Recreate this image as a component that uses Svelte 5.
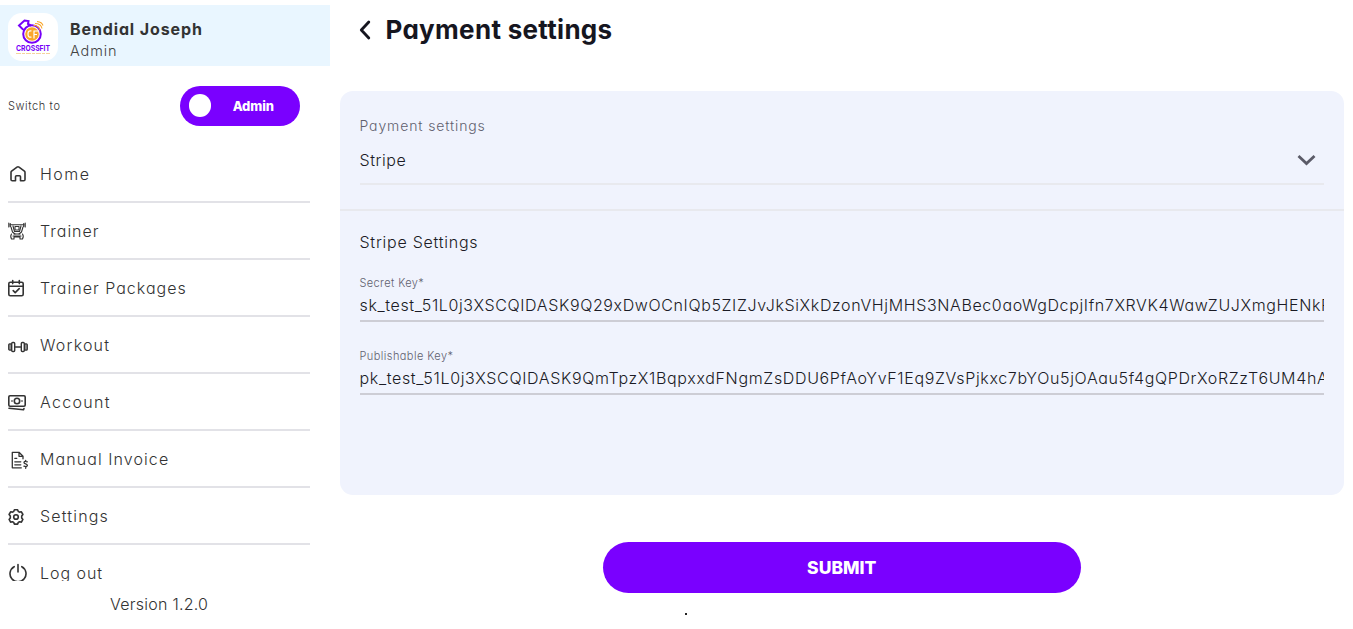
<script>
  const nav = [
    { id: 'home', label: 'Home', ls: 1.45 },
    { id: 'trainer', label: 'Trainer', ls: 1.0 },
    { id: 'packages', label: 'Trainer Packages', ls: 1.02 },
    { id: 'workout', label: 'Workout', ls: 1.2 },
    { id: 'account', label: 'Account', ls: 1.32 },
    { id: 'invoice', label: 'Manual Invoice', ls: 1.08 },
    { id: 'settings', label: 'Settings', ls: 1.17 },
    { id: 'logout', label: 'Log out', ls: 0.95 }
  ];
  const keys = [
    { label: 'Secret Key*', ls: 0.38, vls: 0.625, value: 'sk_test_51L0j3XSCQIDASK9Q29xDwOCnIQb5ZIZJvJkSiXkDzonVHjMHS3NABec0aoWgDcpjIfn7XRVK4WawZUJXmgHENkR' },
    { label: 'Publishable Key*', ls: 0.43, vls: 0.655, value: 'pk_test_51L0j3XSCQIDASK9QmTpzX1BqpxxdFNgmZsDDU6PfAoYvF1Eq9ZVsPjkxc7bYOu5jOAau5f4gQPDrXoRZzT6UM4hA' }
  ];
</script>

<div class="app">
  <aside>
    <header class="profile">
      <div class="avatar">
        <svg width="50" height="48" viewBox="0 0 50 48">
          <circle cx="24" cy="21" r="8.800" fill="#fff" stroke="#7600f8" stroke-width="2" />
          <path d="M17 17.500l-2.500-1.500-3.500-3.500 5.500-5 4 .5-.5 3 3 1.500" fill="none" stroke="#7600f8" stroke-width="2" />
          <circle cx="24" cy="21" r="6.800" fill="#f9a62b" />
          <path d="M23.500 18q-3.500-1-3.500 3t3.500 3M26 25.500v-7.500h4M26 21.500h3" fill="none" stroke="#fff" stroke-width="1.200" />
          <path d="M25.500 12.500q5-.5 6.500 5M27 10.500q6 0 7 5M29 8.500q5 .5 6 4" fill="none" stroke="#f9a62b" stroke-width="1.100" />
          <text x="8" y="38" textLength="34" lengthAdjust="spacingAndGlyphs" font-size="8" font-weight="700" fill="#7600f8">CROSSFIT</text>
          <path d="M8 40.500h34" stroke="#f3c684" stroke-width=".8" stroke-dasharray="5 1 3 1" />
        </svg>
      </div>
      <div class="who"><strong>Bendial Joseph</strong><span>Admin</span></div>
    </header>

    <div class="switch"><span>Switch to</span><button class="toggle"><i></i><b>Admin</b></button></div>

    <nav>
      {#each nav as item}
        <a class="row">
          <svg width="22" height="22" viewBox="0 0 22 22" fill="none" stroke="#333" stroke-width="1.600" stroke-linejoin="round" stroke-linecap="round">
            {#if item.id === 'home'}
              <path d="M3 9.500q0-.8.600-1.300L9 4.100q1-.7 2 0l5.400 4.100q.6.500.6 1.300v7q0 1.300-1.300 1.300h-3.200v-4q0-1-1-1h-3q-1 0-1 1v4H4.300Q3 17.800 3 16.500z" />
            {:else if item.id === 'trainer'}
              <g stroke-width="1.100"><path d="M.8 3v4M2.300 3.500v3M17.200 3v4M15.700 3.500v3M2 4.700h14M3 7l1.500 5L7 14M15 7l-1.500 5L11 14M5 6l1.500 5.500h5L13 6" /><rect x="7" y="6.500" width="4" height="3.500" /><path d="M6 14h6M3.500 14q-1.500 2 0 5h2.500v-2h6v2h2.500q1.500-3 0-5M5 16h8" /></g>
            {:else if item.id === 'packages'}
              <rect x=".8" y="5.300" width="14.400" height="13.500" rx="1.500" /><path d="M.8 9.300h14.400M4.700 3.600v3M11.300 3.600v3M5.200 13.600l2 2 4-4" />
            {:else if item.id === 'workout'}
              <rect x=".7" y="9.800" width="2.800" height="6.400" rx="1" fill="#999" stroke-width="1.200" /><rect x="16.500" y="9.800" width="2.800" height="6.400" rx="1" fill="#999" stroke-width="1.200" />
              <rect x="3.700" y="8.500" width="3" height="9" rx="1" fill="#fff" stroke-width="1.400" /><rect x="13.300" y="8.500" width="3" height="9" rx="1" fill="#fff" stroke-width="1.400" /><path d="M7.500 13h5" />
            {:else if item.id === 'account'}
              <rect x=".8" y="4.700" width="16.400" height="10.500" rx="1.200" /><circle cx="9" cy="10" r="2.700" /><path d="M3.900 10h.2M13.900 10h.2M1 17.300l14.500 1.500.5-1.300" />
            {:else if item.id === 'invoice'}
              <g transform="translate(0 .8)" stroke-width="1.300"><path d="M15 10V7.500l-4-4H4.300V19h9M11 3.500v4h4M6.800 9.500h2M6.800 13h6M6.800 16h6" /><path d="M19.300 13q-3-1.200-3.300.6 0 1 1.700 1.500t1.700 1.600q-.3 1.700-3.500.6M17.700 11.500v1M17.700 17.800v1.700" /></g>
            {:else if item.id === 'settings'}
              <path transform="translate(0 2)" d="M5.700 4.500l.7-1.700h3.200l.7 1.700 1.200.6 1.900-.3 1.500 2.700-1.200 1.500v1.900l1.200 1.500-1.500 2.700-1.900-.3-1.200.6-.7 1.700H6.400l-.7-1.700-1.200-.6-1.900.3-1.500-2.700 1.200-1.500V9L1.100 7.500l1.500-2.700 1.900.3z" /><circle cx="8" cy="12" r="2.300" />
            {:else}
              <path d="M6.200 4.700a8 8 0 1 0 7.600 0M10 2.500v7.500" />
            {/if}
          </svg>
          <span style="letter-spacing:{item.ls}px">{item.label}</span>
        </a>
      {/each}
    </nav>
    <footer>Version 1.2.0</footer>
  </aside>

  <main>
    <div class="title">
      <svg width="14" height="22" viewBox="0 0 14 22"><path d="M10.800 3L3.300 11l7.500 8" fill="none" stroke="#16161f" stroke-width="2.800" stroke-linecap="round" stroke-linejoin="round" /></svg>
      <h1>Payment settings</h1>
    </div>
    <section class="card">
      <div class="provider">
        <label>Payment settings</label>
        <div class="select"><span>Stripe</span>
          <svg width="20" height="14" viewBox="0 0 20 14"><path d="M2.500 3l8 7.500 8-7.500" fill="none" stroke="#5b5b68" stroke-width="2.800" /></svg>
        </div>
      </div>
      <div class="details">
        <h2>Stripe Settings</h2>
        {#each keys as k}
          <div class="field">
            <label style="letter-spacing:{k.ls}px">{k.label}</label>
            <div class="value" style="letter-spacing:{k.vls}px">{k.value}</div>
          </div>
        {/each}
      </div>
    </section>
    <button class="submit">SUBMIT</button>
    <div class="dot"></div>
  </main>
</div>

<style>
  :global(body) { background: #fff; overflow: hidden; }
  .app { display: flex; height: 629px; overflow: hidden; font-family: Inter, sans-serif; font-feature-settings: "cv11", "calt" 0; color: #333; }
  button { border: 0; font-family: inherit; font-feature-settings: inherit; padding: 0; }
  aside { width: 330px; flex: none; padding-top: 5px; box-sizing: border-box; display: flex; flex-direction: column; }
  .profile { height: 60.500px; background: #e9f6ff; display: flex; flex: none; padding: 8px 8px 0; box-sizing: border-box; gap: 12px; }
  .avatar { width: 50px; height: 48px; border-radius: 14px; background: #fff; overflow: hidden; }
  .who { display: flex; flex-direction: column; padding-top: 5px; }
  .who strong { font-size: 16px; line-height: 22px; letter-spacing: .88px; }
  .who span { font-size: 14.500px; line-height: 22px; letter-spacing: .9px; font-weight: 300; color: #444; }
  .switch { display: flex; justify-content: space-between; align-items: center; height: 40px; flex: none; padding: 0 30px 0 8px; margin-top: 20px; font-size: 11px; font-weight: 350; letter-spacing: .6px; }
  .toggle { width: 120.500px; height: 40px; border-radius: 20px; background: #7a00ff; color: #fff; display: flex; align-items: center; padding: 0 26px 0 9px; box-sizing: border-box; justify-content: space-between; }
  .toggle i { width: 22.500px; height: 22.500px; border-radius: 50%; background: #fff; }
  .toggle b { font-size: 13px; font-weight: 800; letter-spacing: -.1px; }
  nav { margin-top: 20px; height: 435.500px; flex: none; overflow: hidden; padding: 0 20px 0 8px; }
  .row { height: 57px; box-sizing: border-box; padding-top: 2px; border-bottom: 2px solid #e2e2e7; display: flex; align-items: center; gap: 10px; font-size: 16px; font-weight: 300; }
  footer { padding: 13px 0 0 110px; font-size: 16px; line-height: 20px; font-weight: 300; letter-spacing: .25px; }
  main { flex: 1; min-width: 0; padding: 0 9px 0 9.500px; display: flex; flex-direction: column; align-items: center; }
  .title { align-self: stretch; height: 91px; box-sizing: border-box; padding: 13px 0 0 18px; display: flex; gap: 14px; align-items: flex-start; color: #16161f; }
  .title svg { margin-top: 6px; }
  h1 { margin: 0; font-size: 26px; line-height: 34px; letter-spacing: .3px; }
  .card { align-self: stretch; flex: none; height: 403.500px; border-radius: 13px; background: #f0f3fd; color: #1b1b25; }
  .provider { height: 120px; box-sizing: border-box; padding: 25px 20px 0; border-bottom: 2px solid #e8e9ee; }
  .provider label { display: block; font-size: 14px; line-height: 20px; letter-spacing: .88px; font-weight: 350; color: #5f5f6e; }
  .select { display: flex; justify-content: space-between; align-items: center; height: 49px; box-sizing: border-box; padding: 0 8px 0 0; border-bottom: 2px solid #e8e9ee; font-size: 16px; font-weight: 350; letter-spacing: .55px; }
  .details { padding: 20px 20px 0; }
  h2 { margin: 0 0 22px; font-size: 16px; line-height: 22px; font-weight: 350; letter-spacing: .75px; }
  .field { height: 73px; }
  .field label { display: block; font-size: 11px; line-height: 16px; font-weight: 350; color: #5f5f6e; }
  .value { height: 31px; line-height: 28px; box-sizing: border-box; border-bottom: 2px solid #cdcdd5; font-size: 16px; font-weight: 300; white-space: nowrap; overflow: hidden; }
  .submit { width: 478px; height: 51px; flex: none; margin-top: 47.500px; border-radius: 26px; background: #7a00ff; color: #fff; font-size: 17.500px; font-weight: 800; letter-spacing: 0; }
  .dot { width: 2px; height: 2px; background: #222; margin: 20px 311px 0 0; }
</style>
